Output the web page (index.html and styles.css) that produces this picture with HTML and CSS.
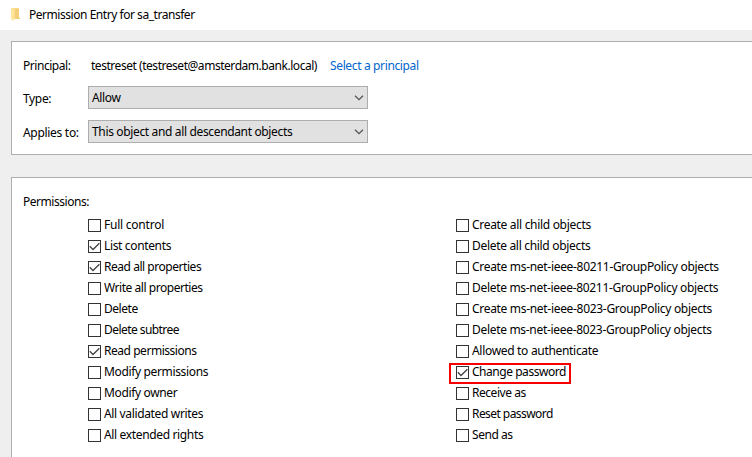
FILE: index.html
```
<!DOCTYPE html>
<html lang="en">
<head>
<meta charset="utf-8">
<title>Permission Entry for sa_transfer</title>
<link rel="stylesheet" href="styles.css">
</head>
<body>
<svg width="0" height="0" class="defs" aria-hidden="true">
  <symbol id="tick" viewBox="0 0 11 11"><path d="M.8 5.3 4 8.5 10.4 2.3" fill="none" stroke="#444" stroke-width="1.3"/></symbol>
  <symbol id="chevron" viewBox="0 0 10 6"><path d="M1 .8 5 4.7 9 .8" fill="none" stroke="#555" stroke-width="1.3"/></symbol>
</svg>
<header class="titlebar">
  <svg class="folder" viewBox="0 0 10 13"><path d="M1 0h7v9l1 2H1z" fill="#f9dc8c"/><path d="M4 1h4v8l1 2H4z" fill="#f3d078"/><path d="M0 0l3 1.500v11.500l-3-2z" fill="#ffe59c"/></svg>
  <span class="tight">Permission Entry for sa_transfer</span>
</header>
<main>
  <section class="panel entry">
    <div class="row principal"><span class="label tight">Principal:</span><span class="account tight">testreset (testreset@amsterdam.bank.local)</span><a class="link">Select a principal</a></div>
    <div class="row type"><span class="label">Type:</span><div class="select"><span>Allow</span><svg class="chevron"><use href="#chevron"/></svg></div></div>
    <div class="row applies"><span class="label">Applies to:</span><div class="select"><span class="scope">This object and all descendant objects</span><svg class="chevron"><use href="#chevron"/></svg></div></div>
  </section>
  <section class="panel permissions">
    <div class="heading tight">Permissions:</div>
    <div class="columns">
      <ul>
        <li><i class="box"></i><span class="loose">Full control</span></li>
        <li><i class="box"><svg><use href="#tick"/></svg></i><span>List contents</span></li>
        <li><i class="box"><svg><use href="#tick"/></svg></i><span class="tight">Read all properties</span></li>
        <li><i class="box"></i><span class="tight">Write all properties</span></li>
        <li><i class="box"></i><span class="tight">Delete</span></li>
        <li><i class="box"></i><span class="tighter">Delete subtree</span></li>
        <li><i class="box"><svg><use href="#tick"/></svg></i><span class="tight">Read permissions</span></li>
        <li><i class="box"></i><span>Modify permissions</span></li>
        <li><i class="box"></i><span>Modify owner</span></li>
        <li><i class="box"></i><span>All validated writes</span></li>
        <li><i class="box"></i><span>All extended rights</span></li>
      </ul>
      <ul class="objects">
        <li><i class="box"></i><span>Create all child objects</span></li>
        <li><i class="box"></i><span>Delete all child objects</span></li>
        <li><i class="box"></i><span>Create ms-net-ieee-80211-GroupPolicy objects</span></li>
        <li><i class="box"></i><span>Delete ms-net-ieee-80211-GroupPolicy objects</span></li>
        <li><i class="box"></i><span>Create ms-net-ieee-8023-GroupPolicy objects</span></li>
        <li><i class="box"></i><span>Delete ms-net-ieee-8023-GroupPolicy objects</span></li>
        <li><i class="box"></i><span>Allowed to authenticate</span></li>
        <li class="marked"><i class="box"><svg><use href="#tick"/></svg></i><span class="tight">Change password</span></li>
        <li><i class="box"></i><span class="tight">Receive as</span></li>
        <li><i class="box"></i><span class="tighter">Reset password</span></li>
        <li><i class="box"></i><span class="tight">Send as</span></li>
      </ul>
    </div>
  </section>
</main>
</body>
</html>
```
FILE: styles.css
```
* { box-sizing: border-box; }
html, body { height: 100%; margin: 0; overflow: hidden; }
body {
  display: flex;
  flex-direction: column;
  background: #efefef;
  color: #000;
  font: 12px/16px "Noto Sans", "Open Sans", sans-serif;
  letter-spacing: -0.35px;
  white-space: nowrap;
}
.loose { letter-spacing: -0.23px; }
.tight { letter-spacing: -0.46px; }
.tighter { letter-spacing: -0.56px; }
.defs { position: absolute; }
.titlebar {
  flex: none;
  display: flex;
  gap: 8px;
  height: 30px;
  padding: 7px 0 0 11px;
  background: #fff;
}
.folder { width: 10px; height: 13px; margin-top: 1px; }
main {
  flex: 1;
  display: flex;
  flex-direction: column;
  gap: 22px;
  padding: 11px 0 0 11px;
  min-height: 0;
}
.panel {
  background: #fff;
  border: 1px solid #aeaeae;
  border-right: 0;
  padding-left: 11px;
}
.entry { flex: none; height: 114px; padding-top: 16px; }
.permissions { flex: 1; border-bottom: 0; padding-top: 16px; }
.row { display: flex; }
.label { width: 65px; }
.principal { height: 28px; }
.principal .account { width: 242px; padding-left: 3px; }
.link { color: #0066cc; letter-spacing: -0.36px; }
.type { height: 34px; }
.row.type .label, .row.applies .label { padding-top: 5px; }
.row.applies .label { letter-spacing: -0.3px; }
.select {
  display: flex;
  align-items: center;
  justify-content: space-between;
  width: 280px;
  height: 23px;
  padding: 1px 3px 0;
  background: #e1e1e1;
  border: 1px solid #adadad;
}
.chevron { width: 10px; height: 6px; margin-top: -1px; }
.columns { display: flex; padding: 5px 0 0 65px; }
ul { flex: none; width: 368px; margin: 0; padding: 0; list-style: none; }
.objects { width: 296px; letter-spacing: -0.31px; }
li { display: flex; align-items: center; gap: 3px; height: 21px; }
li span { margin-top: -1px; }
.box { flex: none; width: 13px; height: 13px; border: 1px solid #333; background: #fff; }
.box svg { display: block; width: 11px; height: 11px; }
.marked {
  width: 122px;
  margin: 1px 0 -1px -7px;
  padding: 0 0 2px 5px;
  border: 2px solid #f80000;
}
```
